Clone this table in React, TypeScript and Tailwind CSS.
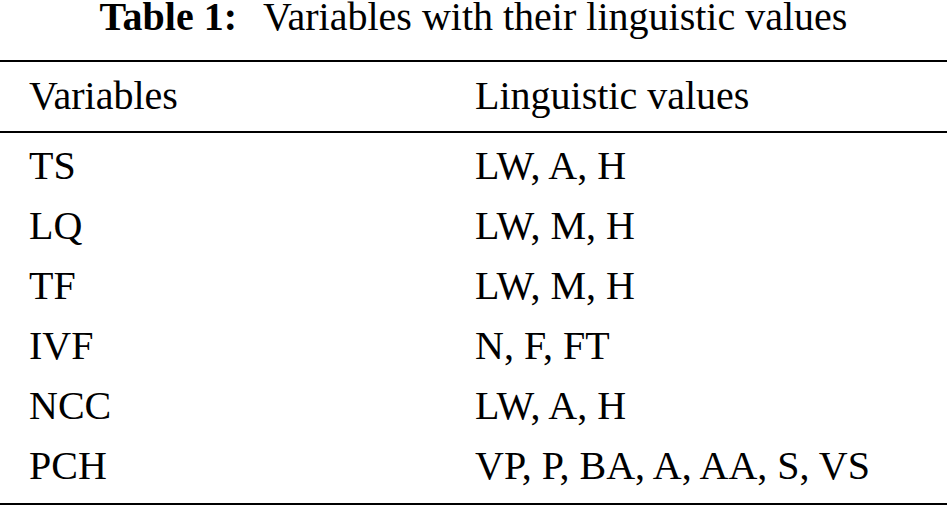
import React from 'react';

const rows = [
  { name: 'TS', values: 'LW, A, H' },
  { name: 'LQ', values: 'LW, M, H' },
  { name: 'TF', values: 'LW, M, H' },
  { name: 'IVF', values: 'N, F, FT' },
  { name: 'NCC', values: 'LW, A, H' },
  { name: 'PCH', values: 'VP, P, BA, A, AA, S, VS' },
];

const serif = { fontFamily: '"Liberation Serif", "Times New Roman", Tinos, serif' };

export default function App() {
  return (
    <div className="w-[947px] h-[508px] bg-white text-black text-[40px] font-['Liberation_Serif']" style={serif}>
      {/* Caption */}
      <div className="flex justify-center gap-[26px] leading-[33px]">
        <span className="font-bold">Table 1:</span>
        <span>Variables with their linguistic values</span>
      </div>

      <div className="mt-[27px] h-[2px] bg-black" />

      {/* Header */}
      <div className="grid grid-cols-[446px_1fr] pl-[29px] pt-[4px] pb-[5px] leading-[60px]">
        <div>Variables</div>
        <div>Linguistic values</div>
      </div>

      <div className="h-[2px] bg-black" />

      {/* Body */}
      <div className="pt-[3px] pb-[7px] pl-[29px] leading-[60px]">
        {rows.map((row) => (
          <div key={row.name} className="grid grid-cols-[446px_1fr]">
            <div>{row.name}</div>
            <div>{row.values}</div>
          </div>
        ))}
      </div>

      <div className="h-[2px] bg-black" />
    </div>
  );
}
